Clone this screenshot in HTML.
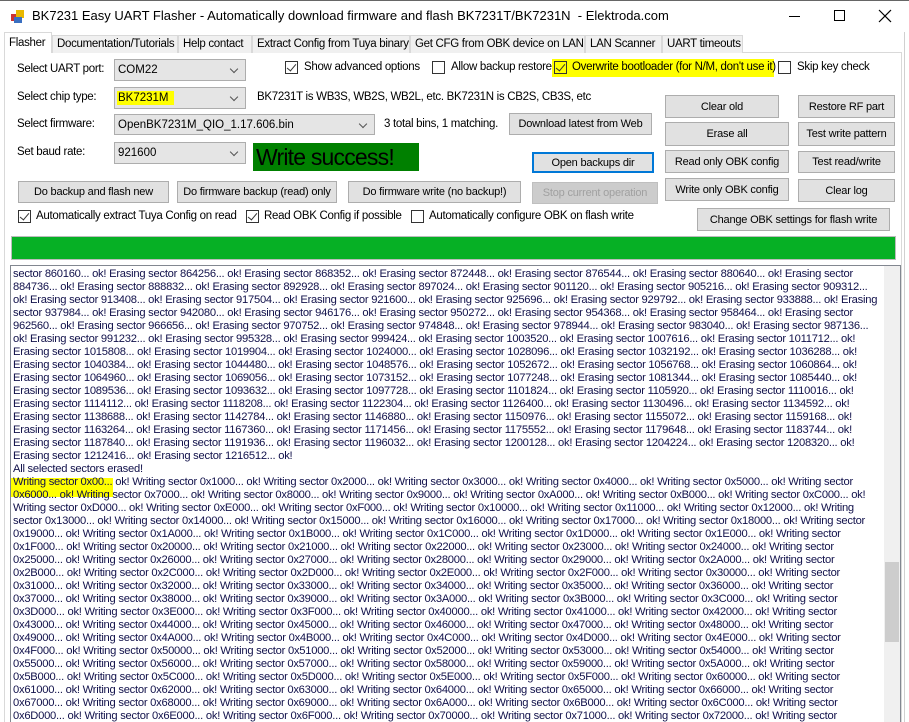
<!DOCTYPE html>
<html><head><meta charset="utf-8"><style>
*{box-sizing:border-box;margin:0;padding:0}
body{width:909px;height:722px;overflow:hidden;background:#fff;font-family:"Liberation Sans",sans-serif;font-size:11px;color:#000;position:relative}
.a{position:absolute;white-space:nowrap}
.btn{position:absolute;background:#e1e1e1;border:1px solid #adadad;text-align:center;font-size:11px;display:flex;align-items:center;justify-content:center;letter-spacing:-0.2px;white-space:nowrap}
.cb{position:absolute;width:13px;height:13px;border:1px solid #333;background:#fff}
.cb.on::after{content:"";position:absolute;left:3px;top:0px;width:4px;height:8px;border:solid #333;border-width:0 1.5px 1.5px 0;transform:rotate(40deg)}
.combo{position:absolute;background:#e5e5e5;border:1px solid #adadad;padding-left:3px;display:flex;align-items:center;font-size:11.5px;white-space:nowrap}
.combo::after{content:"";position:absolute;right:8px;top:6px;width:5px;height:5px;border:solid #555;border-width:0 1px 1px 0;transform:rotate(45deg)}
.tab{position:absolute;top:35px;height:18px;background:#f0f0f0;border:1px solid #d9d9d9;border-bottom:none;font-size:11.5px;padding-left:4px;line-height:16px;letter-spacing:-0.3px;white-space:nowrap;overflow:hidden}
.lbl{position:absolute;font-size:11.5px;white-space:nowrap;letter-spacing:-0.3px}
#log{position:absolute;left:10px;top:265px;width:891px;height:457px;border:1px solid #828790;border-bottom:none;overflow:hidden}
#log div{position:absolute;left:2px;white-space:nowrap;font-size:11.2px;line-height:13px;color:#10104a;letter-spacing:-0.25px}
</style></head><body>
<div class="a" style="left:0;top:0;width:909px;height:1px;background:#666"></div>
<svg class="a" style="left:10px;top:9px" width="16" height="16"><rect x="1" y="5" width="7" height="7" fill="#c33"/><rect x="6" y="1" width="8" height="8" fill="#e8b800"/><rect x="4" y="8" width="8" height="6" fill="#3a6fc0"/></svg>
<div class="a" style="left:32px;top:8px;font-size:13px">BK7231 Easy UART Flasher - Automatically download firmware and flash BK7231T/BK7231N &nbsp;- Elektroda.com</div>
<div class="a" style="left:789px;top:16px;width:11px;height:1px;background:#000"></div>
<div class="a" style="left:834px;top:10px;width:11px;height:11px;border:1px solid #000"></div>
<svg class="a" style="left:878px;top:9px" width="14" height="14"><path d="M1 1L13 13M13 1L1 13" stroke="#000" stroke-width="1.2"/></svg>
<div class="a" style="left:4px;top:52px;width:898px;height:670px;border:1px solid #d9d9d9;border-bottom:none"></div>
<div class="tab" style="left:52px;width:126px">Documentation/Tutorials</div>
<div class="tab" style="left:178px;width:74px">Help contact</div>
<div class="tab" style="left:252px;width:158px">Extract Config from Tuya binary</div>
<div class="tab" style="left:410px;width:175px">Get CFG from OBK device on LAN</div>
<div class="tab" style="left:585px;width:77px">LAN Scanner</div>
<div class="tab" style="left:662px;width:81px">UART timeouts</div>
<div class="tab" style="left:4px;top:32px;width:48px;height:21px;background:#fff;border-color:#d9d9d9;line-height:20px">Flasher</div>
<div class="lbl" style="left:17px;top:63px">Select UART port:</div>
<div class="combo" style="left:114px;top:59px;width:132px;height:22px">COM22</div>
<div class="cb on" style="left:285px;top:61px"></div><div class="lbl" style="left:304px;top:61px">Show advanced options</div>
<div class="cb" style="left:432px;top:61px"></div><div class="lbl" style="left:451px;top:61px">Allow backup restore</div>
<div class="a" style="left:552px;top:59px;width:222px;height:18px;background:#ffff00"></div>
<div class="cb on" style="left:554px;top:61px;background:transparent"></div><div class="lbl" style="left:572px;top:61px">Overwrite bootloader (for N/M, don't use it)</div>
<div class="cb" style="left:778px;top:61px"></div><div class="lbl" style="left:797px;top:61px">Skip key check</div>
<div class="lbl" style="left:17px;top:91px">Select chip type:</div>
<div class="combo" style="left:114px;top:87px;width:132px;height:22px"><span style="background:#ffff00;padding:1px 5px 1px 1px;margin-left:-1px">BK7231M</span></div>
<div class="lbl" style="left:257px;top:91px">BK7231T is WB3S, WB2S, WB2L, etc. BK7231N is CB2S, CB3S, etc</div>
<div class="lbl" style="left:17px;top:118px">Select firmware:</div>
<div class="combo" style="left:114px;top:114px;width:261px;height:21px">OpenBK7231M_QIO_1.17.606.bin</div>
<div class="lbl" style="left:384px;top:118px">3 total bins, 1 matching.</div>
<div class="btn" style="left:509px;top:113px;width:143px;height:22px">Download latest from Web</div>
<div class="btn" style="left:665px;top:95px;width:114px;height:23px">Clear old</div>
<div class="btn" style="left:798px;top:95px;width:97px;height:23px">Restore RF part</div>
<div class="btn" style="left:665px;top:122px;width:124px;height:24px">Erase all</div>
<div class="btn" style="left:798px;top:122px;width:97px;height:24px">Test write pattern</div>
<div class="btn" style="left:665px;top:150px;width:124px;height:23px">Read only OBK config</div>
<div class="btn" style="left:798px;top:151px;width:97px;height:22px">Test read/write</div>
<div class="btn" style="left:665px;top:178px;width:124px;height:23px">Write only OBK config</div>
<div class="btn" style="left:798px;top:179px;width:97px;height:23px">Clear log</div>
<div class="btn" style="left:697px;top:208px;width:193px;height:23px">Change OBK settings for flash write</div>
<div class="btn" style="left:532px;top:152px;width:122px;height:21px;border:2px solid #0078d7">Open backups dir</div>
<div class="lbl" style="left:17px;top:146px">Set baud rate:</div>
<div class="combo" style="left:114px;top:142px;width:132px;height:22px">921600</div>
<div class="a" style="left:253px;top:143px;width:166px;height:28px;background:#008000;font-size:23px;line-height:28px;padding-left:3px;letter-spacing:-0.8px">Write success!</div>
<div class="btn" style="left:18px;top:181px;width:151px;height:22px">Do backup and flash new</div>
<div class="btn" style="left:177px;top:181px;width:160px;height:22px">Do firmware backup (read) only</div>
<div class="btn" style="left:348px;top:181px;width:173px;height:22px">Do firmware write (no backup!)</div>
<div class="btn" style="left:532px;top:182px;width:126px;height:22px;background:#cccccc;border-color:#bfbfbf;color:#a0a0a0">Stop current operation</div>
<div class="cb on" style="left:18px;top:210px"></div><div class="lbl" style="left:36px;top:210px">Automatically extract Tuya Config on read</div>
<div class="cb on" style="left:246px;top:210px"></div><div class="lbl" style="left:264px;top:210px">Read OBK Config if possible</div>
<div class="cb" style="left:411px;top:210px"></div><div class="lbl" style="left:429px;top:210px">Automatically configure OBK on flash write</div>
<div class="a" style="left:11px;top:236px;width:885px;height:24px;background:#06b025;border:1px solid #bcbcbc"></div>
<div id="log">
<div class="a" style="left:-10px;top:212px;width:112px;height:19px;background:#ffff00"></div>
<div class="a" style="left:873px;top:0;width:17px;height:457px;background:#f0f0f0"></div>
<div class="a" style="left:874px;top:296px;width:14px;height:80px;background:#cdcdcd"></div>
<div style="top:2px">sector 860160... ok! Erasing sector 864256... ok! Erasing sector 868352... ok! Erasing sector 872448... ok! Erasing sector 876544... ok! Erasing sector 880640... ok! Erasing sector</div>
<div style="top:15px">884736... ok! Erasing sector 888832... ok! Erasing sector 892928... ok! Erasing sector 897024... ok! Erasing sector 901120... ok! Erasing sector 905216... ok! Erasing sector 909312...</div>
<div style="top:28px">ok! Erasing sector 913408... ok! Erasing sector 917504... ok! Erasing sector 921600... ok! Erasing sector 925696... ok! Erasing sector 929792... ok! Erasing sector 933888... ok! Erasing</div>
<div style="top:41px">sector 937984... ok! Erasing sector 942080... ok! Erasing sector 946176... ok! Erasing sector 950272... ok! Erasing sector 954368... ok! Erasing sector 958464... ok! Erasing sector</div>
<div style="top:54px">962560... ok! Erasing sector 966656... ok! Erasing sector 970752... ok! Erasing sector 974848... ok! Erasing sector 978944... ok! Erasing sector 983040... ok! Erasing sector 987136...</div>
<div style="top:67px">ok! Erasing sector 991232... ok! Erasing sector 995328... ok! Erasing sector 999424... ok! Erasing sector 1003520... ok! Erasing sector 1007616... ok! Erasing sector 1011712... ok!</div>
<div style="top:80px">Erasing sector 1015808... ok! Erasing sector 1019904... ok! Erasing sector 1024000... ok! Erasing sector 1028096... ok! Erasing sector 1032192... ok! Erasing sector 1036288... ok!</div>
<div style="top:93px">Erasing sector 1040384... ok! Erasing sector 1044480... ok! Erasing sector 1048576... ok! Erasing sector 1052672... ok! Erasing sector 1056768... ok! Erasing sector 1060864... ok!</div>
<div style="top:106px">Erasing sector 1064960... ok! Erasing sector 1069056... ok! Erasing sector 1073152... ok! Erasing sector 1077248... ok! Erasing sector 1081344... ok! Erasing sector 1085440... ok!</div>
<div style="top:119px">Erasing sector 1089536... ok! Erasing sector 1093632... ok! Erasing sector 1097728... ok! Erasing sector 1101824... ok! Erasing sector 1105920... ok! Erasing sector 1110016... ok!</div>
<div style="top:132px">Erasing sector 1114112... ok! Erasing sector 1118208... ok! Erasing sector 1122304... ok! Erasing sector 1126400... ok! Erasing sector 1130496... ok! Erasing sector 1134592... ok!</div>
<div style="top:145px">Erasing sector 1138688... ok! Erasing sector 1142784... ok! Erasing sector 1146880... ok! Erasing sector 1150976... ok! Erasing sector 1155072... ok! Erasing sector 1159168... ok!</div>
<div style="top:158px">Erasing sector 1163264... ok! Erasing sector 1167360... ok! Erasing sector 1171456... ok! Erasing sector 1175552... ok! Erasing sector 1179648... ok! Erasing sector 1183744... ok!</div>
<div style="top:171px">Erasing sector 1187840... ok! Erasing sector 1191936... ok! Erasing sector 1196032... ok! Erasing sector 1200128... ok! Erasing sector 1204224... ok! Erasing sector 1208320... ok!</div>
<div style="top:184px">Erasing sector 1212416... ok! Erasing sector 1216512... ok!</div>
<div style="top:197px">All selected sectors erased!</div>
<div style="top:210px">Writing sector 0x00... ok! Writing sector 0x1000... ok! Writing sector 0x2000... ok! Writing sector 0x3000... ok! Writing sector 0x4000... ok! Writing sector 0x5000... ok! Writing sector</div>
<div style="top:223px">0x6000... ok! Writing sector 0x7000... ok! Writing sector 0x8000... ok! Writing sector 0x9000... ok! Writing sector 0xA000... ok! Writing sector 0xB000... ok! Writing sector 0xC000... ok!</div>
<div style="top:236px">Writing sector 0xD000... ok! Writing sector 0xE000... ok! Writing sector 0xF000... ok! Writing sector 0x10000... ok! Writing sector 0x11000... ok! Writing sector 0x12000... ok! Writing</div>
<div style="top:249px">sector 0x13000... ok! Writing sector 0x14000... ok! Writing sector 0x15000... ok! Writing sector 0x16000... ok! Writing sector 0x17000... ok! Writing sector 0x18000... ok! Writing sector</div>
<div style="top:262px">0x19000... ok! Writing sector 0x1A000... ok! Writing sector 0x1B000... ok! Writing sector 0x1C000... ok! Writing sector 0x1D000... ok! Writing sector 0x1E000... ok! Writing sector</div>
<div style="top:275px">0x1F000... ok! Writing sector 0x20000... ok! Writing sector 0x21000... ok! Writing sector 0x22000... ok! Writing sector 0x23000... ok! Writing sector 0x24000... ok! Writing sector</div>
<div style="top:288px">0x25000... ok! Writing sector 0x26000... ok! Writing sector 0x27000... ok! Writing sector 0x28000... ok! Writing sector 0x29000... ok! Writing sector 0x2A000... ok! Writing sector</div>
<div style="top:301px">0x2B000... ok! Writing sector 0x2C000... ok! Writing sector 0x2D000... ok! Writing sector 0x2E000... ok! Writing sector 0x2F000... ok! Writing sector 0x30000... ok! Writing sector</div>
<div style="top:314px">0x31000... ok! Writing sector 0x32000... ok! Writing sector 0x33000... ok! Writing sector 0x34000... ok! Writing sector 0x35000... ok! Writing sector 0x36000... ok! Writing sector</div>
<div style="top:327px">0x37000... ok! Writing sector 0x38000... ok! Writing sector 0x39000... ok! Writing sector 0x3A000... ok! Writing sector 0x3B000... ok! Writing sector 0x3C000... ok! Writing sector</div>
<div style="top:340px">0x3D000... ok! Writing sector 0x3E000... ok! Writing sector 0x3F000... ok! Writing sector 0x40000... ok! Writing sector 0x41000... ok! Writing sector 0x42000... ok! Writing sector</div>
<div style="top:353px">0x43000... ok! Writing sector 0x44000... ok! Writing sector 0x45000... ok! Writing sector 0x46000... ok! Writing sector 0x47000... ok! Writing sector 0x48000... ok! Writing sector</div>
<div style="top:366px">0x49000... ok! Writing sector 0x4A000... ok! Writing sector 0x4B000... ok! Writing sector 0x4C000... ok! Writing sector 0x4D000... ok! Writing sector 0x4E000... ok! Writing sector</div>
<div style="top:379px">0x4F000... ok! Writing sector 0x50000... ok! Writing sector 0x51000... ok! Writing sector 0x52000... ok! Writing sector 0x53000... ok! Writing sector 0x54000... ok! Writing sector</div>
<div style="top:392px">0x55000... ok! Writing sector 0x56000... ok! Writing sector 0x57000... ok! Writing sector 0x58000... ok! Writing sector 0x59000... ok! Writing sector 0x5A000... ok! Writing sector</div>
<div style="top:405px">0x5B000... ok! Writing sector 0x5C000... ok! Writing sector 0x5D000... ok! Writing sector 0x5E000... ok! Writing sector 0x5F000... ok! Writing sector 0x60000... ok! Writing sector</div>
<div style="top:418px">0x61000... ok! Writing sector 0x62000... ok! Writing sector 0x63000... ok! Writing sector 0x64000... ok! Writing sector 0x65000... ok! Writing sector 0x66000... ok! Writing sector</div>
<div style="top:431px">0x67000... ok! Writing sector 0x68000... ok! Writing sector 0x69000... ok! Writing sector 0x6A000... ok! Writing sector 0x6B000... ok! Writing sector 0x6C000... ok! Writing sector</div>
<div style="top:444px">0x6D000... ok! Writing sector 0x6E000... ok! Writing sector 0x6F000... ok! Writing sector 0x70000... ok! Writing sector 0x71000... ok! Writing sector 0x72000... ok! Writing sector</div>
</div>
<div class="a" style="left:904px;top:32px;width:1px;height:690px;background:#d0d0d0"></div>
</body></html>
